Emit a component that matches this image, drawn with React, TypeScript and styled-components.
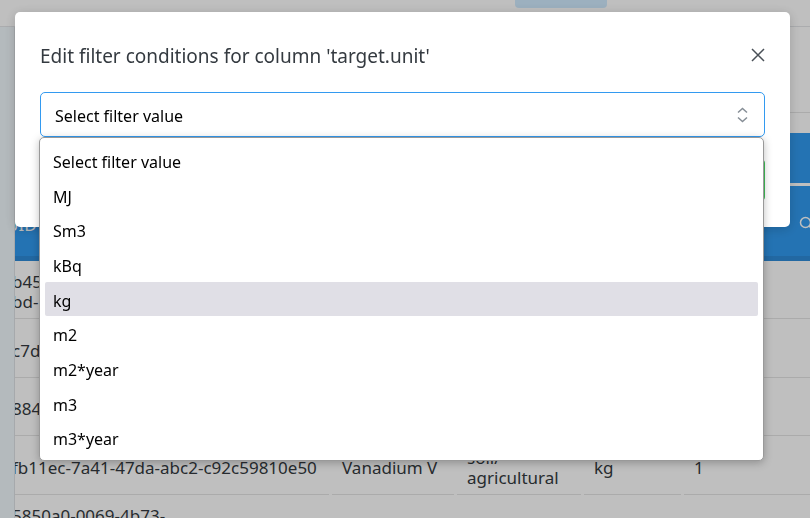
import React, { useState } from "react";
import styled, { createGlobalStyle } from "styled-components";

const GlobalStyle = createGlobalStyle`
  *, *::before, *::after { box-sizing: border-box; }
  html, body, #root { height: 100%; }
  body {
    margin: 0;
    overflow: hidden;
    background: #ffffff;
    color: #343a40;
    font-family: "Noto Sans", "Open Sans", sans-serif;
    font-size: 16px;
  }
  button, select { font: inherit; }
`;

const Page = styled.div`
  display: flex;
  flex-direction: column;
  height: 100%;
`;

const TopBar = styled.header`
  display: flex;
  flex: none;
  justify-content: flex-end;
  height: 27px;
  padding-right: 203px;
  border-bottom: 1px solid #e4e6e9;
`;

const NavTab = styled.div`
  width: 92px;
  height: 8px;
  border-radius: 0 0 4px 4px;
  background: #d0ebff;
`;

const Body = styled.div`
  display: flex;
  flex: 1;
  min-height: 0;
`;

const Sidebar = styled.aside`
  flex: none;
  width: 15px;
  border-right: 1px solid #dee2e6;
  background: #f1f8fc;
`;

const Content = styled.main`
  flex: 1;
  min-width: 0;
  overflow: hidden;
`;

const Toolbar = styled.div`
  height: 86px;
  border-bottom: 1px solid #e4e4e4;
`;

const Table = styled.table`
  width: calc(100% + 37px);
  margin-top: 20px;
  margin-left: -18px;
  border-collapse: separate;
  border-spacing: 3px 0;
  table-layout: fixed;
  font-size: 17px;
`;

const Column = styled.col<{ $width?: number }>`
  width: ${({ $width }) => ($width ? `${$width}px` : "auto")};
`;

const Banner = styled.th`
  height: 53px;
  padding: 0;
  border-bottom: 3px solid #ffffff;
  background: #319aef;
  background-clip: padding-box;
`;

const HeadCell = styled.th`
  height: 75px;
  padding: 6px 10px 0 6px;
  border-bottom: 5px solid #2e8bd8;
  background: #319aef;
  color: #ffffff;
  font-weight: 400;
  text-align: left;
`;

const HeadIconCell = styled(HeadCell)`
  padding-top: 2px;
  text-align: right;

  svg { display: inline-block; vertical-align: middle; }
`;

const Row = styled.tr`
  height: 58px;
  &:nth-child(even) { height: 59px; }
`;

const Cell = styled.td`
  padding: 5px 10px 0;
  border-bottom: 1px solid #e4e4e4;
  line-height: 20px;
  white-space: pre-line;
`;

const IdCell = styled(Cell)`
  padding-right: 0;
  padding-left: 12px;
`;

const Overlay = styled.div`
  position: fixed;
  inset: 0;
  padding: 12px 20px 0 15px;
  background: rgba(0, 0, 0, 0.25);
`;

const Dialog = styled.section`
  padding: 25px 25px 26px;
  border-radius: 5px;
  background: #ffffff;
  box-shadow: 0 2px 12px rgba(0, 0, 0, 0.18);
`;

const DialogHead = styled.div`
  display: flex;
  align-items: center;
  justify-content: space-between;
  height: 38px;
  margin-bottom: 17px;
`;

const Title = styled.h2`
  margin: 0;
  font-size: 19px;
  font-weight: 400;
`;

const CloseButton = styled.button`
  display: flex;
  padding: 0 0 2px;
  border: 0;
  background: none;
  color: #495057;
`;

const Field = styled.div`
  position: relative;
`;

const SelectBox = styled.div`
  display: grid;
  align-items: center;
  height: 45px;
  border: 1px solid #339af0;
  border-radius: 5px;

  > * { grid-area: 1 / 1; }
`;

const Select = styled.select`
  width: 100%;
  height: 100%;
  padding: 2px 40px 0 14px;
  border: 0;
  outline: 0;
  appearance: none;
  background: transparent;
  color: #000000;
`;

const Chevrons = styled.svg`
  justify-self: end;
  margin-right: 16px;
  pointer-events: none;
`;

const Options = styled.ul`
  position: absolute;
  top: 45px;
  right: 1px;
  left: -1px;
  margin: 0;
  padding: 5px 5px 6px;
  border: 1px solid #999999;
  border-radius: 5px;
  background: #ffffff;
  box-shadow: 0 2px 8px rgba(0, 0, 0, 0.25);
  list-style: none;
`;

const Option = styled.li<{ $active: boolean }>`
  display: flex;
  align-items: center;
  height: 34px;
  margin-top: 1px;
  padding: 3px 8px 0;
  border-radius: 2px;
  background: ${({ $active }) => ($active ? "#e0dfe6" : "transparent")};
  color: #000000;

  &:first-child, &:nth-child(3n) { margin-top: 0; }
`;

const Actions = styled.div`
  display: flex;
  justify-content: flex-end;
  padding-top: 22px;
`;

const ApplyButton = styled.button`
  height: 42px;
  padding: 0 20px;
  border: 1px solid #40c057;
  border-radius: 4px;
  background: #40c057;
  color: #ffffff;
`;

const units = ["MJ", "Sm3", "kBq", "kg", "m2", "m2*year", "m3", "m3*year"];
const placeholder = "Select filter value";

const rows = [
  ["b45\nbd-", "", "", "", ""],
  ["c7d", "", "", "", ""],
  ["884", "", "", "", ""],
  ["fb11ec-7a41-47da-abc2-c92c59810e50", "Vanadium V", "soil/\nagricultural", "kg", "1"],
  ["5850a0-0069-4b73-\n\u00a0", "", "", "", ""],
];

export default function App() {
  const [value, setValue] = useState("");
  const [active, setActive] = useState("kg");

  return (
    <>
      <GlobalStyle />
      <Page>
        <TopBar><NavTab /></TopBar>
        <Body>
          <Sidebar />
          <Content>
            <Toolbar />
            <Table>
              <colgroup>
                <Column $width={329} />
                <Column $width={122} />
                <Column $width={124} />
                <Column $width={97} />
                <Column />
              </colgroup>
              <thead>
                <tr><Banner colSpan={5} /></tr>
                <tr>
                  <HeadCell>UID</HeadCell>
                  <HeadCell />
                  <HeadCell />
                  <HeadCell />
                  <HeadIconCell aria-label="Search">
                    <svg width="18" height="18" viewBox="0 0 18 18" fill="none" stroke="currentColor" strokeWidth="1.5">
                      <circle cx="7.5" cy="7.5" r="5" />
                      <path d="M11 11l5 5" />
                    </svg>
                  </HeadIconCell>
                </tr>
              </thead>
              <tbody>
                {rows.map(([id, ...rest]) => (
                  <Row key={id}>
                    <IdCell>{id}</IdCell>
                    {rest.map((text, i) => <Cell key={i}>{text}</Cell>)}
                  </Row>
                ))}
              </tbody>
            </Table>
          </Content>
        </Body>
      </Page>
      <Overlay>
        <Dialog role="dialog" aria-labelledby="filter-title">
          <DialogHead>
            <Title id="filter-title">Edit filter conditions for column 'target.unit'</Title>
            <CloseButton type="button" aria-label="Close">
              <svg width="14" height="14" viewBox="0 0 14 14" fill="none" stroke="currentColor" strokeWidth="1.5">
                <path d="M1 1l12 12M13 1L1 13" />
              </svg>
            </CloseButton>
          </DialogHead>
          <Field>
            <SelectBox>
              <Select aria-label="Filter value" value={value} onChange={(e) => setValue(e.target.value)}>
                <option value="">{placeholder}</option>
                {units.map((unit) => <option key={unit}>{unit}</option>)}
              </Select>
              <Chevrons width="12" height="16" viewBox="0 0 12 16" fill="none" stroke="#868e96" strokeWidth="1.5">
                <path d="M2 5.5L6.5 1.5 11 5.5M2 10.5l4.5 4 4.5-4" />
              </Chevrons>
            </SelectBox>
            <Options role="listbox" aria-label="Filter value options">
              {[placeholder, ...units].map((unit) => (
                <Option key={unit} role="option" aria-selected={unit === active} $active={unit === active} onMouseEnter={() => setActive(unit)}>
                  {unit}
                </Option>
              ))}
            </Options>
          </Field>
          <Actions><ApplyButton type="button">Apply</ApplyButton></Actions>
        </Dialog>
      </Overlay>
    </>
  );
}
